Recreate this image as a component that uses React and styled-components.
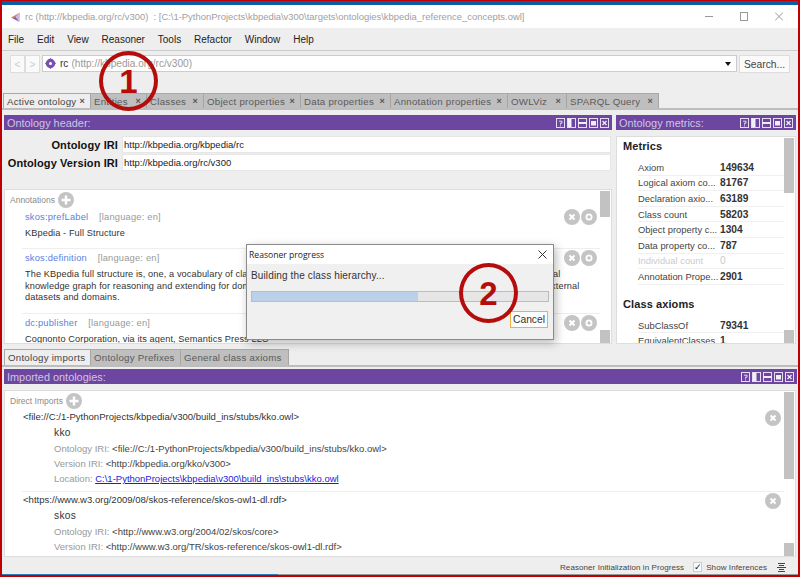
import React from "react";
import styled, { createGlobalStyle } from "styled-components";

const Global = createGlobalStyle`
  html, body { margin: 0; padding: 0; background: #eee; }
  body { font-family: "Liberation Sans", Arial, sans-serif; overflow: hidden; }
  * { box-sizing: border-box; }
`;

const Frame = styled.div`
  position: relative;
  width: 800px;
  height: 577px;
  border-style: solid;
  border-color: #c00000;
  border-width: 1px 2px 2px 2px;
  background: #eee;
  display: flex;
  flex-direction: column;
  overflow: hidden;
`;

const BlueEdge = styled.div`
  height: 4px;
  background: #0a5ea8;
  flex: none;
`;

const TitleBar = styled.div`
  height: 23px;
  flex: none;
  background: #fff;
  display: flex;
  align-items: center;
  padding-left: 8px;
  color: #a0a0a0;
  font-size: 9.45px;
`;

const TitleText = styled.span`
  margin-left: 3px;
  white-space: pre;
`;

const WindowButtons = styled.div`
  margin-left: auto;
  display: flex;
  gap: 27px;
  padding-right: 15px;
  svg { display: block; }
`;

const MenuBar = styled.div`
  height: 23px;
  flex: none;
  display: flex;
  align-items: center;
  gap: 12.9px;
  padding: 1px 0 0 6px;
  font-size: 10px;
  color: #222;
  border-bottom: 1px solid #ccc;
`;

const NavBar = styled.div`
  height: 42px;
  flex: none;
  display: flex;
  align-items: flex-start;
  padding: 4px 8px 0 8px;
`;

const NavArrow = styled.div`
  width: 15px;
  height: 18px;
  background: #fafafa;
  border: 1px solid #ddd;
  color: #ccc;
  font-size: 10px;
  display: flex;
  align-items: center;
  justify-content: center;
`;

const Combo = styled.div`
  width: 695px;
  height: 17px;
  margin-left: 2px;
  background: #fff;
  border: 1px solid #ccc;
  display: flex;
  align-items: center;
  padding: 0 5px 0 2px;
  font-size: 10.1px;
  color: #333;
`;

const Muted = styled.span`
  color: #999;
  margin-left: 3px;
`;

const ComboArrow = styled.div`
  margin-left: auto;
  width: 0;
  height: 0;
  border-left: 3.5px solid transparent;
  border-right: 3.5px solid transparent;
  border-top: 4px solid #111;
`;

const SearchButton = styled.div`
  width: 51px;
  height: 18px;
  margin-left: 2px;
  background: #fafafa;
  border: 1px solid #ddd;
  font-size: 10.3px;
  color: #444;
  display: flex;
  align-items: center;
  justify-content: center;
`;

const Tabs = styled.div`
  height: ${(p) => p.$h}px;
  flex: none;
  display: flex;
  padding-left: ${(p) => p.$pad}px;
  border-bottom: 2px solid #bdbdbd;
`;

const Tab = styled.div`
  width: ${(p) => p.$w}px;
  flex: none;
  display: flex;
  align-items: center;
  padding: 0 5px 0 3px;
  font-size: 9.7px;
  letter-spacing: 0.25px;
  white-space: nowrap;
  color: ${(p) => (p.$active ? "#444" : "#5a5a5a")};
  background: ${(p) => (p.$active ? "#eee" : "#bfbfbf")};
  border-top: 1px solid #aaa;
  border-right: 1px solid #a5a5a5;
  border-left: ${(p) => (p.$active ? "1px solid #aaa" : "0")};
`;

const TabClose = styled.span`
  margin-left: auto;
  font-size: 9px;
  font-weight: bold;
  color: #555;
`;

const Workspace = styled.div`
  height: 234px;
  flex: none;
  display: flex;
  gap: 4px;
  padding: 5px 0 0 2px;
`;

const Panel = styled.div`
  width: ${(p) => p.$w}px;
  flex: none;
  display: flex;
  flex-direction: column;
`;

const PanelHeader = styled.div`
  height: 15px;
  flex: none;
  background: #6c46a0;
  color: #cfc5e2;
  font-size: 10.9px;
  display: flex;
  align-items: center;
  padding: 0 3px 0 3px;
`;

const ViewButtons = styled.div`
  margin-left: auto;
  display: flex;
  gap: 2px;
  svg { display: block; }
`;

const IriSection = styled.div`
  height: 59px;
  flex: none;
  padding-top: 6px;
  display: flex;
  flex-direction: column;
  gap: 1px;
`;

const IriRow = styled.div`
  display: flex;
  height: 17px;
  align-items: center;
`;

const IriLabel = styled.div`
  width: 114px;
  flex: none;
  text-align: right;
  font-weight: bold;
  font-size: 11px;
  letter-spacing: 0.1px;
  color: #111;
  white-space: nowrap;
`;

const IriValue = styled.div`
  flex: 1;
  height: 17px;
  margin-left: 4px;
  margin-right: 1px;
  background: #fff;
  border: 1px solid #e6e6e6;
  font-size: 9.5px;
  color: #222;
  padding-left: 1px;
  display: flex;
  align-items: center;
`;

const WhiteBox = styled.div`
  flex: 1;
  min-height: 0;
  background: #fff;
  border: 1px solid #ddd;
  display: flex;
  overflow: hidden;
`;

const MetricsBox = styled(WhiteBox)`
  margin-top: 6px;
`;

const BoxBody = styled.div`
  flex: 1;
  min-width: 0;
  overflow: hidden;
`;

const Track = styled.div`
  width: 10px;
  flex: none;
  margin: 1px 1px 0 0;
  display: flex;
  flex-direction: column;
  justify-content: space-between;
`;

const Thumb = styled.div`
  height: ${(p) => p.$h}px;
  background: #c2c2c2;
`;

const SectionTitle = styled.div`
  display: flex;
  align-items: center;
  height: 16px;
  margin-top: 2px;
  padding-left: 5px;
  gap: 3px;
  font-size: 8.5px;
  color: #8a8a8a;
`;

const AnnotationRow = styled.div`
  display: flex;
  margin-left: 17px;
  padding-left: 3px;
  height: ${(p) => p.$h}px;
  border-bottom: ${(p) => (p.$line ? "1px solid #eee" : "0")};
  padding-top: 3px;
`;

const AnnotationText = styled.div`
  flex: 1;
  min-width: 0;
`;

const AnnotationHead = styled.div`
  font-size: 9.3px;
  line-height: 12px;
  color: #999;
  letter-spacing: 0.2px;
  a { color: #5b7fe0; text-decoration: none; margin-right: 8px; }
`;

const AnnotationValue = styled.div`
  font-size: 9.2px;
  line-height: 11.7px;
  margin-top: 5px;
  color: #333;
  white-space: pre;
  letter-spacing: 0.1px;
`;

const RowButtons = styled.div`
  display: flex;
  gap: 1px;
  flex: none;
  height: 16px;
  margin: -2px 3px 0 0;
  svg { display: block; }
`;

const ImportButtons = styled(RowButtons)`
  margin-top: -1px;
`;

const MetricsBody = styled.div`
  flex: 1;
  min-width: 0;
  overflow: hidden;
  padding-left: 6px;
`;

const MetricsTitle = styled.div`
  font-size: 11px;
  font-weight: bold;
  color: #222;
  letter-spacing: 0.1px;
  line-height: 14px;
  margin-top: ${(p) => p.$top}px;
  margin-bottom: ${(p) => p.$bottom}px;
`;

const MetricRow = styled.div`
  display: flex;
  height: 15.6px;
  margin-left: 15px;
  margin-right: -1px;
  align-items: center;
  font-size: 9.4px;
  color: ${(p) => (p.$dim ? "#ccc" : "#444")};
  border-bottom: 1px solid #f0f0f0;
  white-space: nowrap;
`;

const MetricName = styled.div`
  width: 82px;
  flex: none;
`;

const MetricValue = styled.div`
  font-size: 10.2px;
  font-weight: ${(p) => (p.$dim ? "normal" : "bold")};
  color: ${(p) => (p.$dim ? "#ccc" : "#333")};
`;

const LowerTabs = styled(Tabs)`
  margin-top: 5px;
`;

const LowerHeader = styled(PanelHeader)`
  margin: 2px 1px 0 2px;
`;

const ImportsBox = styled(WhiteBox)`
  margin: 6px 2px 0 2px;
  height: 167px;
  flex: none;
`;

const ImportRow = styled.div`
  display: flex;
  margin-left: 17px;
  padding-left: 1px;
  height: ${(p) => p.$h}px;
  border-bottom: ${(p) => (p.$line ? "1px solid #eee" : "0")};
  padding-top: ${(p) => p.$top}px;
`;

const ImportBody = styled.div`
  flex: 1;
  min-width: 0;
`;

const ImportUri = styled.div`
  font-size: 9.55px;
  line-height: 12px;
  color: #333;
  white-space: nowrap;
`;

const ImportName = styled.div`
  font-size: 10.2px;
  line-height: 12px;
  margin: 4px 0 2px 31px;
  color: #333;
  letter-spacing: 0.3px;
`;

const ImportDetail = styled.div`
  font-size: 9.5px;
  line-height: 15px;
  margin-left: 31px;
  color: #444;
  white-space: nowrap;
  a { color: #1a1ae0; text-decoration: underline; }
`;

const Faint = styled.span`
  color: #999;
`;

const StatusBar = styled.div`
  flex: 1;
  display: flex;
  align-items: center;
  justify-content: flex-end;
  padding: 3px 12px 0 0;
  font-size: 8px;
  letter-spacing: 0.08px;
  color: #444;
  border-bottom: 1px solid;
  border-image: linear-gradient(to right, #2f7db8 276px, #999 276px) 1;
`;

const CheckBox = styled.div`
  width: 9px;
  height: 10px;
  margin: 0 4px 0 9px;
  background: #fafafa;
  border: 1px solid #ccc;
  color: #111;
  font-size: 9px;
  line-height: 9px;
  text-align: center;
`;

const StatusIcon = styled.svg`
  margin-left: 10px;
`;

const Dialog = styled.div`
  position: absolute;
  left: 244px;
  top: 243px;
  width: 308px;
  height: 96px;
  background: #f0f0f0;
  border: 1px solid #8a8a8a;
  box-shadow: 2px 3px 9px rgba(0, 0, 0, 0.28);
  display: flex;
  flex-direction: column;
`;

const DialogTitle = styled.div`
  height: 19px;
  flex: none;
  background: #fff;
  display: flex;
  align-items: center;
  justify-content: space-between;
  padding: 0 6px 0 2px;
  font-family: "Open Sans", sans-serif;
  font-size: 8.6px;
  color: #222;
`;

const DialogBody = styled.div`
  flex: 1;
  padding: 5px 4px 0 4px;
  display: flex;
  flex-direction: column;
`;

const DialogMessage = styled.div`
  font-size: 10px;
  line-height: 14px;
  color: #333;
  letter-spacing: 0.14px;
`;

const Progress = styled.div`
  height: 11px;
  margin-top: 8px;
  background: #e6e6e6;
  border: 1px solid #bcbcbc;
`;

const ProgressFill = styled.div`
  height: 100%;
  background: #bdd0e9;
`;

const CancelButton = styled.div`
  align-self: flex-end;
  margin: 9px 1px 0 0;
  width: 38px;
  height: 17px;
  background: #fdfdfd;
  border: 1px solid #f0b040;
  font-size: 10.3px;
  color: #333;
  display: flex;
  align-items: center;
  justify-content: center;
`;

const Callout = styled.div`
  position: absolute;
  left: ${(p) => p.$x}px;
  top: ${(p) => p.$y}px;
  width: 59px;
  height: 60px;
  border: 4.5px solid #b50c0c;
  border-radius: 50%;
  color: #b50c0c;
  font-size: 33px;
  font-weight: bold;
  display: flex;
  align-items: center;
  justify-content: center;
  padding-top: 1px;
`;

const CircleIcon = ({ kind, size = 16 }) => (
  <svg width={size} height={size} viewBox="0 0 16 16">
    <circle cx="8" cy="8" r="8" fill="#c4c4c4" />
    {kind === "plus" && <path d="M8 3.5v9M3.5 8h9" stroke="#fff" strokeWidth="2.4" />}
    {kind === "x" && <path d="M5.5 5.5l5 5M10.5 5.5l-5 5" stroke="#fff" strokeWidth="2" />}
    {kind === "o" && <circle cx="8" cy="8" r="2.6" fill="none" stroke="#fff" strokeWidth="1.8" />}
  </svg>
);

const ViewIcon = ({ kind }) => (
  <svg width="9" height="10" viewBox="0 0 9 10">
    <rect x="0.5" y="0.5" width="8" height="9" fill="none" stroke="#e4dcf0" />
    {kind === "help" && <path d="M3 3.2h3v2H4.5v1.4M4.5 7.4v1" fill="none" stroke="#e4dcf0" />}
    {kind === "vsplit" && <rect x="1" y="1" width="3.5" height="8" fill="#f2eef8" />}
    {kind === "hsplit" && <path d="M0 5h9" stroke="#f2eef8" strokeWidth="2" />}
    {kind === "max" && <rect x="2" y="3" width="5" height="4.5" fill="#f2eef8" />}
    {kind === "close" && <path d="M2.5 3l4 4M6.5 3l-4 4" stroke="#f2eef8" strokeWidth="1.3" />}
  </svg>
);

const ViewGroup = () => (
  <ViewButtons>
    <ViewIcon kind="help" />
    <ViewIcon kind="vsplit" />
    <ViewIcon kind="hsplit" />
    <ViewIcon kind="max" />
    <ViewIcon kind="close" />
  </ViewButtons>
);

const NavIcon = styled.svg`
  margin-right: 4px;
`;

const mainTabs = [
  ["Active ontology", 88, true],
  ["Entities", 56],
  ["Classes", 57],
  ["Object properties", 97],
  ["Data properties", 90],
  ["Annotation properties", 117],
  ["OWLViz", 59],
  ["SPARQL Query", 92],
];

const lowerTabs = [
  ["Ontology imports", 87, true],
  ["Ontology Prefixes", 90],
  ["General class axioms", 108],
];

const metrics = [
  ["Axiom", "149634"],
  ["Logical axiom co...", "81767"],
  ["Declaration axio...", "63189"],
  ["Class count", "58203"],
  ["Object property c...", "1304"],
  ["Data property co...", "787"],
  ["Individual count", "0", true],
  ["Annotation Prope...", "2901"],
];

const annotationButtons = (
  <RowButtons>
    <CircleIcon kind="x" />
    <CircleIcon kind="o" />
  </RowButtons>
);

export default function App() {
  return (
    <Frame>
      <Global />
      <BlueEdge />
      <TitleBar>
        <svg width="12" height="12" viewBox="0 0 12 12">
          <path d="M1 6.5L10 1.5 6 6z" fill="#d98a4a" />
          <path d="M1 6.5L6 6 9.5 11z" fill="#8a5cc0" />
          <path d="M10 1.5L6 6l3.5 5z" fill="#c8b8e0" />
        </svg>
        <TitleText>rc (http://kbpedia.org/rc/v300)  : [C:\1-PythonProjects\kbpedia\v300\targets\ontologies\kbpedia_reference_concepts.owl]</TitleText>
        <WindowButtons>
          <svg width="8" height="9" viewBox="0 0 8 9"><path d="M0 4.5h8" stroke="#999" /></svg>
          <svg width="8" height="9" viewBox="0 0 8 9"><rect x="0.5" y="0.5" width="7" height="8" fill="none" stroke="#999" /></svg>
          <svg width="8" height="9" viewBox="0 0 8 9"><path d="M0 .5l8 8M8 .5l-8 8" stroke="#999" /></svg>
        </WindowButtons>
      </TitleBar>
      <MenuBar>
        {["File", "Edit", "View", "Reasoner", "Tools", "Refactor", "Window", "Help"].map((m) => (
          <span key={m}>{m}</span>
        ))}
      </MenuBar>
      <NavBar>
        <NavArrow>&lt;</NavArrow>
        <NavArrow>&gt;</NavArrow>
        <Combo>
          <NavIcon width="11" height="11" viewBox="0 0 11 11">
            <circle cx="5.5" cy="5.5" r="4" fill="none" stroke="#7a4fb0" strokeWidth="1.4" />
            <path d="M5.5 0L11 5.5 5.5 11 0 5.5z" fill="#7a4fb0" />
            <circle cx="5.5" cy="5.5" r="1.5" fill="#fff" />
          </NavIcon>
          rc<Muted>(http://kbpedia.org/rc/v300)</Muted>
          <ComboArrow />
        </Combo>
        <SearchButton>Search...</SearchButton>
      </NavBar>
      <Tabs $h={17} $pad={1}>
        {mainTabs.map(([label, w, active]) => (
          <Tab key={label} $w={w} $active={active}>
            {label}
            <TabClose>×</TabClose>
          </Tab>
        ))}
      </Tabs>
      <Workspace>
        <Panel $w={608}>
          <PanelHeader>
            Ontology header:
            <ViewGroup />
          </PanelHeader>
          <IriSection>
            <IriRow>
              <IriLabel>Ontology IRI</IriLabel>
              <IriValue>http://kbpedia.org/kbpedia/rc</IriValue>
            </IriRow>
            <IriRow>
              <IriLabel>Ontology Version IRI</IriLabel>
              <IriValue>http://kbpedia.org/rc/v300</IriValue>
            </IriRow>
          </IriSection>
          <WhiteBox>
            <BoxBody>
              <SectionTitle>
                Annotations
                <CircleIcon kind="plus" />
              </SectionTitle>
              <AnnotationRow $h={41} $line>
                <AnnotationText>
                  <AnnotationHead><a>skos:prefLabel</a> [language: en]</AnnotationHead>
                  <AnnotationValue>KBpedia - Full Structure</AnnotationValue>
                </AnnotationText>
                {annotationButtons}
              </AnnotationRow>
              <AnnotationRow $h={65} $line>
                <AnnotationText>
                  <AnnotationHead><a>skos:definition</a> [language: en]</AnnotationHead>
                  <AnnotationValue>
                    {"The KBpedia full structure is, one, a vocabulary of classes and properties for describing domain of use and, two, a computational\nknowledge graph for reasoning and extending for domains of knowledge of all kinds, mapped and linked to many of the large external\ndatasets and domains."}
                  </AnnotationValue>
                </AnnotationText>
                {annotationButtons}
              </AnnotationRow>
              <AnnotationRow $h={40}>
                <AnnotationText>
                  <AnnotationHead><a>dc:publisher</a> [language: en]</AnnotationHead>
                  <AnnotationValue>Cognonto Corporation, via its agent, Semantics Press LLC</AnnotationValue>
                </AnnotationText>
                {annotationButtons}
              </AnnotationRow>
            </BoxBody>
            <Track>
              <Thumb $h={26} />
              <Thumb $h={13} />
            </Track>
          </WhiteBox>
        </Panel>
        <Panel $w={180}>
          <PanelHeader>
            Ontology metrics:
            <ViewGroup />
          </PanelHeader>
          <MetricsBox>
            <MetricsBody>
              <MetricsTitle $top={2} $bottom={7}>Metrics</MetricsTitle>
              {metrics.map(([name, value, dim]) => (
                <MetricRow key={name} $dim={dim}>
                  <MetricName>{name}</MetricName>
                  <MetricValue $dim={dim}>{value}</MetricValue>
                </MetricRow>
              ))}
              <MetricsTitle $top={12} $bottom={7}>Class axioms</MetricsTitle>
              <MetricRow>
                <MetricName>SubClassOf</MetricName>
                <MetricValue>79341</MetricValue>
              </MetricRow>
              <MetricRow>
                <MetricName>EquivalentClasses</MetricName>
                <MetricValue>1</MetricValue>
              </MetricRow>
            </MetricsBody>
            <Track>
              <Thumb $h={55} />
              <Thumb $h={13} />
            </Track>
          </MetricsBox>
        </Panel>
      </Workspace>
      <LowerTabs $h={18} $pad={2}>
        {lowerTabs.map(([label, w, active]) => (
          <Tab key={label} $w={w} $active={active}>{label}</Tab>
        ))}
      </LowerTabs>
      <LowerHeader>
        Imported ontologies:
        <ViewGroup />
      </LowerHeader>
      <ImportsBox>
        <BoxBody>
          <SectionTitle>
            Direct Imports
            <CircleIcon kind="plus" />
          </SectionTitle>
          <ImportRow $h={83} $top={2} $line>
            <ImportBody>
              <ImportUri>&lt;file://C:/1-PythonProjects/kbpedia/v300/build_ins/stubs/kko.owl&gt;</ImportUri>
              <ImportName>kko</ImportName>
              <ImportDetail><Faint>Ontology IRI:</Faint> &lt;file://C:/1-PythonProjects/kbpedia/v300/build_ins/stubs/kko.owl&gt;</ImportDetail>
              <ImportDetail><Faint>Version IRI:</Faint> &lt;http://kbpedia.org/kko/v300&gt;</ImportDetail>
              <ImportDetail><Faint>Location:</Faint> <a>C:\1-PythonProjects\kbpedia\v300\build_ins\stubs\kko.owl</a></ImportDetail>
            </ImportBody>
            <ImportButtons><CircleIcon kind="x" /></ImportButtons>
          </ImportRow>
          <ImportRow $h={62} $top={2}>
            <ImportBody>
              <ImportUri>&lt;https://www.w3.org/2009/08/skos-reference/skos-owl1-dl.rdf&gt;</ImportUri>
              <ImportName>skos</ImportName>
              <ImportDetail><Faint>Ontology IRI:</Faint> &lt;http://www.w3.org/2004/02/skos/core&gt;</ImportDetail>
              <ImportDetail><Faint>Version IRI:</Faint> &lt;http://www.w3.org/TR/skos-reference/skos-owl1-dl.rdf&gt;</ImportDetail>
            </ImportBody>
            <ImportButtons><CircleIcon kind="x" /></ImportButtons>
          </ImportRow>
        </BoxBody>
        <Track>
          <Thumb $h={87} />
          <Thumb $h={13} />
        </Track>
      </ImportsBox>
      <StatusBar>
        Reasoner Initialization in Progress
        <CheckBox>✓</CheckBox>
        Show Inferences
        <StatusIcon width="9" height="9" viewBox="0 0 9 9">
          <path d="M1 .5h7M2 2.5h5M0 4.5h9M2 6.5h5M1 8.5h7" stroke="#444" />
        </StatusIcon>
      </StatusBar>
      <Dialog>
        <DialogTitle>
          Reasoner progress
          <svg width="9" height="9" viewBox="0 0 9 9"><path d="M0.5 0.5l8 8M8.5 0.5l-8 8" stroke="#333" /></svg>
        </DialogTitle>
        <DialogBody>
          <DialogMessage>Building the class hierarchy...</DialogMessage>
          <Progress>
            <ProgressFill style={{ width: "56%" }} />
          </Progress>
          <CancelButton>Cancel</CancelButton>
        </DialogBody>
      </Dialog>
      <Callout $x={97} $y={50}>1</Callout>
      <Callout $x={457} $y={262}>2</Callout>
    </Frame>
  );
}
